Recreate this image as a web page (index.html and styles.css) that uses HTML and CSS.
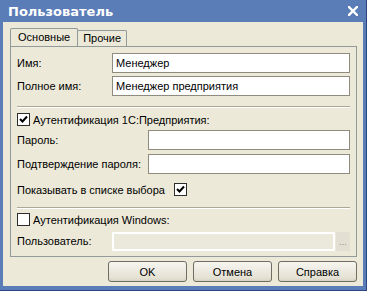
FILE: index.html
```html
<!DOCTYPE html>
<html lang="ru">
<head>
<meta charset="utf-8">
<title>Пользователь</title>
<link rel="stylesheet" href="styles.css">
</head>
<body>
<div class="window">
  <div class="titlebar">
    <span class="title">Пользователь</span>
    <svg class="close" width="10" height="10" viewBox="0 0 10 10"><path d="M1 1 L9 9 M9 1 L1 9" stroke="#fff" stroke-width="2.4" stroke-linecap="square"/></svg>
  </div>
  <div class="client">
    <div class="tabs">
      <div class="tab active">Основные</div>
      <div class="tab">Прочие</div>
    </div>
    <div class="panel">
      <div class="row r1">
        <span class="lbl w95">Имя:</span>
        <div class="input">Менеджер</div>
      </div>
      <div class="row r2">
        <span class="lbl w95">Полное имя:</span>
        <div class="input">Менеджер предприятия</div>
      </div>
      <div class="sep s1"></div>
      <div class="check-row c1">
        <span class="cb checked"><svg width="9" height="9" viewBox="0 0 9 9"><path d="M1 4 L3.5 6.5 L8 1.5" fill="none" stroke="#000" stroke-width="2"/></svg></span>
        <span class="cb-text">Аутентификация 1С:Предприятия:</span>
      </div>
      <div class="row r3">
        <span class="lbl w131">Пароль:</span>
        <div class="input"></div>
      </div>
      <div class="row r4">
        <span class="lbl w131">Подтверждение пароля:</span>
        <div class="input"></div>
      </div>
      <div class="check-row c2">
        <span class="lbl w157">Показывать в списке выбора</span>
        <span class="cb checked"><svg width="9" height="9" viewBox="0 0 9 9"><path d="M1 4 L3.5 6.5 L8 1.5" fill="none" stroke="#000" stroke-width="2"/></svg></span>
      </div>
      <div class="sep s2"></div>
      <div class="check-row c3">
        <span class="cb"></span>
        <span class="cb-text">Аутентификация Windows:</span>
      </div>
      <div class="row r5">
        <span class="lbl w95">Пользователь:</span>
        <div class="input disabled"></div>
        <div class="dots">...</div>
      </div>
    </div>
    <div class="buttons">
      <button class="btn">OK</button>
      <button class="btn">Отмена</button>
      <button class="btn">Справка</button>
    </div>
  </div>
</div>
</body>
</html>
```
FILE: styles.css
```css
html, body {
  margin: 0;
  padding: 0;
  background: #5a7cb7;
}
body {
  font-family: "Liberation Sans", Arial, sans-serif;
  font-size: 11px;
  color: #000;
  white-space: nowrap;
}
.window {
  width: 367px;
  height: 291px;
  box-sizing: border-box;
  background: #5a7cb7;
  border-right: 1px solid #2a4680;
  border-bottom: 1px solid #2a4680;
  display: flex;
  flex-direction: column;
}
.titlebar {
  height: 22px;
  display: flex;
  align-items: center;
  justify-content: space-between;
  padding: 0 8px 0 8px;
  color: #fff;
}
.title {
  font-family: "DejaVu Sans", sans-serif;
  font-weight: bold;
  font-size: 13px;
}
.close {
  display: block;
}
.client {
  background: #ece9d8;
  margin: 0 3px 4px 3px;
  flex: 1;
  padding: 7px 6px 0 7px;
  display: flex;
  flex-direction: column;
}
.tabs {
  display: flex;
  align-items: flex-end;
  height: 17px;
  position: relative;
  z-index: 1;
}
.tab {
  border: 1px solid #919b9c;
  border-bottom: none;
  padding: 0 5px;
  height: 15px;
  line-height: 15px;
  background: #ece9d8;
  border-radius: 2px 2px 0 0;
}
.tab.active {
  height: 17px;
  line-height: 17px;
  padding: 0 7px;
}
.tab + .tab {
  margin-left: -1px;
}
.panel {
  border: 1px solid #919b9c;
  height: 211px;
  box-sizing: border-box;
  padding: 6px 6px 0 6px;
  display: flex;
  flex-direction: column;
}
.row {
  display: flex;
  align-items: center;
  height: 20px;
}
.r2 { margin-top: 3px; }
.r3 { margin-top: 4px; }
.r4 { margin-top: 4px; }
.r5 { margin-top: 5px; }
.lbl {
  flex: none;
}
.w95 { width: 95px; }
.w131 { width: 131px; }
.w157 { width: 157px; }
.input {
  flex: 1;
  height: 20px;
  box-sizing: border-box;
  border: 1px solid #8f8b7e;
  background: #fff;
  padding: 0 3px;
  line-height: 18px;
}
.input.disabled {
  border: 2px solid #fff;
  background: #ebe8dc;
  height: 19px;
}
.dots {
  width: 14px;
  height: 19px;
  box-sizing: border-box;
  background: #e3e0d3;
  color: #8a887e;
  font-size: 9px;
  text-align: center;
  line-height: 20px;
  margin-left: 1px;
}
.sep {
  height: 0;
  border-top: 1px solid #aca899;
  border-bottom: 1px solid #fff;
}
.s1 { margin-top: 10px; }
.s2 { margin-top: 11px; }
.check-row {
  display: flex;
  align-items: center;
  height: 13px;
}
.c1 { margin-top: 5px; }
.c2 { margin-top: 9px; }
.c3 { margin-top: 4px; }
.cb {
  width: 13px;
  height: 13px;
  box-sizing: border-box;
  border: 1px solid #2d2d2d;
  background: #fff;
  display: flex;
  align-items: center;
  justify-content: center;
  flex: none;
}
.cb svg { display: block; }
.cb-text {
  margin-left: 3px;
}
.buttons {
  display: flex;
  justify-content: flex-end;
  gap: 6px;
  margin-top: 4px;
}
.btn {
  width: 79px;
  height: 21px;
  font-family: "Liberation Sans", Arial, sans-serif;
  font-size: 11px;
  color: #000;
  border: 1px solid #6f6c62;
  border-radius: 3px;
  background: linear-gradient(#f6f5f0, #e4e1d4 85%, #d6d2c2);
  padding: 0;
}
```
